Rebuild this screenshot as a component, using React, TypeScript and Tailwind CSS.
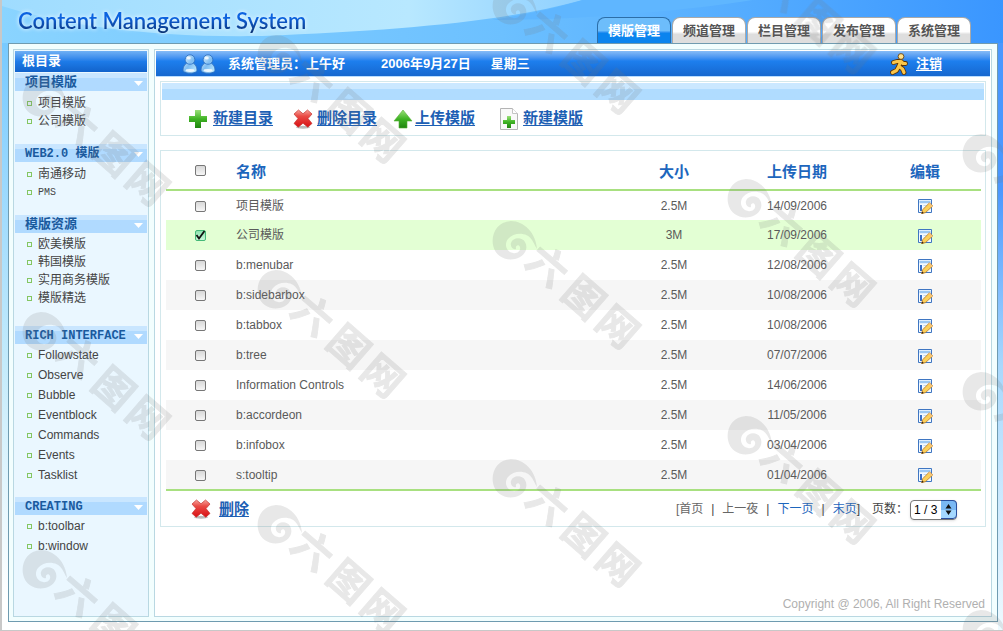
import { useState } from "react";
import clsx from "clsx";

const tabs = ["模版管理", "频道管理", "栏目管理", "发布管理", "系统管理"];

const sections = [
  { title: "项目模版", items: ["项目模版", "公司模版"], className: "pt-[3px] pb-[14px]" },
  { title: "WEB2.0 模版", items: ["南通移动", "PMS"], className: "pt-[3px] pb-[14px]" },
  { title: "模版资源", items: ["欧美模版", "韩国模版", "实用商务模版", "模版精选"], className: "pt-[2px] pb-[19px]" },
  {
    title: "RICH INTERFACE",
    items: ["Followstate", "Observe", "Bubble", "Eventblock", "Commands", "Events", "Tasklist"],
    className: "pt-px pb-3",
    tall: true,
  },
  { title: "CREATING", items: ["b:toolbar", "b:window"], className: "pt-px pb-3", tall: true },
];

const files = [
  { name: "项目模版", size: "2.5M", date: "14/09/2006" },
  { name: "公司模版", size: "3M", date: "17/09/2006" },
  { name: "b:menubar", size: "2.5M", date: "12/08/2006" },
  { name: "b:sidebarbox", size: "2.5M", date: "10/08/2006" },
  { name: "b:tabbox", size: "2.5M", date: "10/08/2006" },
  { name: "b:tree", size: "2.5M", date: "07/07/2006" },
  { name: "Information Controls", size: "2.5M", date: "14/06/2006" },
  { name: "b:accordeon", size: "2.5M", date: "11/05/2006" },
  { name: "b:infobox", size: "2.5M", date: "03/04/2006" },
  { name: "s:tooltip", size: "2.5M", date: "01/04/2006" },
];

const marks = [
  [513, 6], [513, 241], [513, 479],
  [278, 55], [278, 290], [278, 525],
  [748, -35], [748, 199], [748, 436],
  [983, 154], [983, 392], [983, 630],
  [43, 98], [43, 332], [43, 570],
];

function PlusIcon() {
  return (
    <svg width="20" height="20" viewBox="0 0 20 20" aria-hidden="true">
      <defs>
        <linearGradient id="plus" x1="0" y1="0" x2="0" y2="1">
          <stop offset="0" stopColor="#9be07a" />
          <stop offset="0.5" stopColor="#3fb324" />
          <stop offset="1" stopColor="#1f8410" />
        </linearGradient>
      </defs>
      <path d="M7 1h6v6h6v6h-6v6H7v-6H1V7h6z" fill="url(#plus)" />
    </svg>
  );
}

function CrossIcon() {
  return (
    <svg width="20" height="20" viewBox="0 0 20 20" aria-hidden="true">
      <defs>
        <linearGradient id="cross" x1="0" y1="0" x2="0" y2="1">
          <stop offset="0" stopColor="#f6a49c" />
          <stop offset="0.35" stopColor="#ea4b45" />
          <stop offset="1" stopColor="#d80f14" />
        </linearGradient>
      </defs>
      <ellipse cx="10" cy="18.3" rx="7" ry="1.5" fill="#bbb" />
      <path
        d="M1 5 5.500 1 10 4.800 14.500 1l4.500 4-4 4.600 4 4.800-4.200 3.800L10 14.200 5.200 18.200 1 14.400l4-4.800z"
        fill="url(#cross)"
        stroke="#c5322e"
        strokeWidth="0.7"
      />
    </svg>
  );
}

function UploadIcon() {
  return (
    <svg width="20" height="20" viewBox="0 0 20 20" aria-hidden="true">
      <path d="M10 1 19 12h-5v7H6v-7H1z" fill="url(#plus)" stroke="#55b036" strokeWidth="0.6" />
    </svg>
  );
}

function NewPageIcon() {
  return (
    <svg width="20" height="24" viewBox="0 0 20 24" aria-hidden="true">
      <path d="M1.500 1.500h12l5 5v16h-17z" fill="#f9f9f9" stroke="#b4b4b4" />
      <path d="M13.500 1.500v5h5" fill="#fff" stroke="#c4c4c4" />
      <path d="M8 9h4v4h4v4h-4v4H8v-4H4v-4h4z" fill="url(#plus)" />
    </svg>
  );
}

function PersonIcon() {
  return (
    <svg width="16" height="20" viewBox="0 0 16 20" aria-hidden="true">
      <defs>
        <linearGradient id="person" x1="0" y1="0" x2="1" y2="1">
          <stop offset="0" stopColor="#e9f7ff" />
          <stop offset="0.5" stopColor="#7dbcf2" />
          <stop offset="1" stopColor="#c6f0ff" />
        </linearGradient>
      </defs>
      <path
        d="M8 .8c-2.800 0-4.800 2-4.800 4.700 0 1.500.6 2.700 1.600 3.600C2.300 10.600 1 13 1 16c0 2 2.900 3.200 7 3.200s7-1.200 7-3.200c0-3-1.300-5.400-3.800-6.900 1-.9 1.600-2.100 1.600-3.600C12.800 2.800 10.800.8 8 .8z"
        fill="url(#person)"
        stroke="#2f6fc0"
        strokeWidth="0.9"
      />
      <path d="M4.800 9.300c2 1.300 4.400 1.300 6.400 0" fill="none" stroke="#3f82d0" />
      <ellipse cx="6.800" cy="4" rx="2" ry="1.600" fill="#fff" opacity="0.8" />
      <ellipse cx="8" cy="16.500" rx="4.500" ry="1.400" fill="#fff" opacity="0.8" />
    </svg>
  );
}

function RunnerIcon() {
  return (
    <svg width="18" height="22" viewBox="0 0 18 22" aria-hidden="true">
      <g strokeLinecap="round" strokeLinejoin="round" fill="none">
        <path d="M10.500 9 8.500 14M3.500 9.500 7 8.500h4l2 2h2.500M8.500 14 6.500 17.500l-4 2M9 13.500l3.500 2.500 1.500 3.500" stroke="#5b3204" strokeWidth="4.800" />
        <path d="M10.500 9 8.500 14M3.500 9.500 7 8.500h4l2 2h2.500M8.500 14 6.500 17.500l-4 2M9 13.500l3.500 2.500 1.500 3.500" stroke="#fcc64a" strokeWidth="3.200" />
      </g>
      <circle cx="11" cy="3.500" r="2.900" fill="#ffe08a" stroke="#5b3204" strokeWidth="0.800" />
    </svg>
  );
}

function EditIcon() {
  return (
    <svg width="16" height="16" viewBox="0 0 16 16" aria-hidden="true">
      <path d="M1.500 1.500h13v13h-13z" fill="#f4faff" stroke="#3f76c2" />
      <path d="M2.500 4h11" stroke="#9cc8f4" strokeWidth="2.500" />
      <path d="M3 7h2v6H3z" fill="#3a6ec4" />
      <path d="M6.500 7.500h5M6.500 10h3" stroke="#c2d8ef" />
      <path d="M12.500 4.800 15.700 8 8.500 14.600 4.600 15.700 5.700 11.700z" fill="#fbd05a" stroke="#b9791f" strokeWidth="0.800" />
      <path d="M12.500 4.800 15.700 8 14.400 9.200 11.200 6.100z" fill="#f5c27a" />
      <path d="m4.600 15.700.6-2.100 1.600 1.500z" fill="#3a220c" />
    </svg>
  );
}

function Checkbox({ label, checked, onChange }: { label: string; checked: boolean; onChange: () => void }) {
  return (
    <label className="inline-grid size-3 place-items-center align-middle">
      <span className="sr-only">{label}</span>
      <input
        type="checkbox"
        checked={checked}
        onChange={onChange}
        className="col-start-1 row-start-1 size-[11px] appearance-none rounded-xs border border-[#777] bg-linear-to-b from-[#d8d8d8] to-[#f6f6f6] checked:border-[#45b978] checked:from-[#8ee2b0] checked:to-[#c8f8da]"
      />
      {checked && (
        <svg width="12" height="12" viewBox="0 0 12 12" className="pointer-events-none col-start-1 row-start-1" aria-hidden="true">
          <path d="M2.500 5 5 8.500 10.500 1" fill="none" stroke="#111" strokeWidth="1.800" />
        </svg>
      )}
    </label>
  );
}

function ToolLink({ icon, children, className }: { icon: React.ReactNode; children: string; className?: string }) {
  return (
    <a href="#" className={clsx("flex items-center text-[15px] font-bold text-[#1d5fb4] underline underline-offset-2", className)}>
      {icon}
      {children}
    </a>
  );
}

function Sidebar() {
  return (
    <aside className="w-[136px] shrink-0 border border-[#b9d8e2] bg-[#eaf7ff] p-px">
      <h2 className="h-[21px] bg-linear-to-b from-[#6fb0f4] via-[#1d7be8] to-[#1263cb] px-[7px] text-[13px] leading-5 font-bold text-white">
        根目录
      </h2>
      <nav className="pt-px">
        {sections.map((section) => (
          <section key={section.title}>
            <h3 className="flex h-[18px] items-center justify-between bg-linear-to-b from-[#c9e6ff] from-30% to-[#b0daff] to-30% pt-[2px] pr-1 pl-[10px] font-['Liberation_Mono','Noto_Sans_CJK_SC',monospace] text-[12px] font-bold text-[#1a5a9e]">
              <span className={/[A-Z]/.test(section.title) ? "" : "text-[13px]"}>{section.title}</span>
              <svg width="9" height="5" viewBox="0 0 9 5" aria-hidden="true">
                <path d="M0 0h9L4.500 5z" fill="#fff" />
              </svg>
            </h3>
            <ul className={clsx("text-[12px] text-[#444]", section.className)}>
              {section.items.map((item) => (
                <li key={item} className={clsx("flex items-center gap-[6px] pl-3", section.tall ? "h-5" : "h-[18px]")}>
                  <span className="size-[5px] border border-[#84c662]" />
                  <a href="#" className={item === "PMS" ? "font-['Liberation_Mono',monospace] text-[10px]" : ""}>
                    {item}
                  </a>
                </li>
              ))}
            </ul>
          </section>
        ))}
      </nav>
    </aside>
  );
}

function FileTable() {
  const [selected, setSelected] = useState<string[]>(["公司模版"]);

  function toggle(name: string) {
    setSelected((prev) => (prev.includes(name) ? prev.filter((n) => n !== name) : [...prev, name]));
  }

  function toggleAll() {
    setSelected((prev) => (prev.length === files.length ? [] : files.map((f) => f.name)));
  }

  return (
    <table className="w-full table-fixed border-b-2 border-[#a8e080] text-[12px] text-[#5a5a5a]">
      <thead>
        <tr className="h-[39px] border-b-2 border-[#a8e080] text-[15px] text-[#1d66bd]">
          <th className="w-[68px]">
            <Checkbox label="全选" checked={selected.length === files.length} onChange={toggleAll} />
          </th>
          <th className="pt-1 pl-[2px] text-left">名称</th>
          <th className="w-[102px] pt-1">大小</th>
          <th className="w-[144px] pt-1">上传日期</th>
          <th className="w-28 pt-1">编辑</th>
        </tr>
      </thead>
      <tbody>
        {files.map((file, i) => {
          const checked = selected.includes(file.name);
          return (
            <tr key={file.name} className={clsx("h-[30px] text-center", checked ? "bg-[#e3ffd4]" : i % 2 ? "bg-[#f6f6f6]" : "bg-white")}>
              <td>
                <Checkbox label={file.name} checked={checked} onChange={() => toggle(file.name)} />
              </td>
              <td className="pl-[2px] text-left">{file.name}</td>
              <td>{file.size}</td>
              <td>{file.date}</td>
              <td>
                <button type="button" aria-label={"编辑 " + file.name} className="align-middle">
                  <EditIcon />
                </button>
              </td>
            </tr>
          );
        })}
      </tbody>
    </table>
  );
}

function Pager() {
  return (
    <div className="flex items-center text-[12px] text-[#444]">
      <span className="text-[#666]">[首页</span>
      <span className="px-2">|</span>
      <span className="text-[#666]">上一夜</span>
      <span className="px-2">|</span>
      <a href="#" className="text-[#1d66bd]">下一页</a>
      <span className="px-2">|</span>
      <a href="#" className="text-[#1d66bd]">末页</a>
      <span>]</span>
      <label htmlFor="page" className="pr-[2px] pl-3">页数：</label>
      <span className="grid h-[19px] w-[47px]">
        <select
          id="page"
          className="col-start-1 row-start-1 appearance-none rounded-sm border border-[#777] bg-white pl-[3px] text-[12px] text-black shadow-sm"
        >
          <option>1 / 3</option>
          <option>2 / 3</option>
          <option>3 / 3</option>
        </select>
        <svg width="16" height="19" viewBox="0 0 16 19" className="pointer-events-none col-start-1 row-start-1 justify-self-end" aria-hidden="true">
          <path d="M0 .5h12a3.500 3.500 0 0 1 3.500 3.500v11a3.500 3.500 0 0 1-3.500 3.500H0z" fill="#79b8f4" />
          <path d="M0 10h15.500v5a3.500 3.500 0 0 1-3.500 3.500H0z" fill="#a4d8ff" />
          <path d="M0 .5h12a3.500 3.500 0 0 1 3.500 3.500v11a3.500 3.500 0 0 1-3.500 3.500H0" fill="none" stroke="#2a4f9e" />
          <path d="M7.500 4 10.500 8.500h-6zM7.500 15 4.500 10.500h6z" fill="#111" />
        </svg>
      </span>
    </div>
  );
}

function Watermark() {
  return (
    <svg className="pointer-events-none absolute inset-0 size-full" aria-hidden="true">
      <g fill="#777" stroke="#777" opacity="0.17">
        {marks.map(([x, y]) => (
          <g key={x + "-" + y} transform={`translate(${x} ${y})`}>
            <path
              d="M22 8C21-8 9-20-4-20c-14 1-20 13-18 24C-20 15-10 20 0 18c9-2 14-10 10-17C7-4-2-4-4 2c-1 4 2 7 5 6-1-4 3-5 4-2 1 4-3 7-7 6-7-1-9-9-5-14C-1-9 12-9 17-1c2 3 3 6 5 9z"
              stroke="none"
            />
            <text
              x="41 89 134"
              y="12"
              textAnchor="middle"
              transform="rotate(41)"
              strokeWidth="0.800"
              className="font-['Noto_Sans_CJK_SC',sans-serif] text-[40px] font-bold"
            >
              六图网
            </text>
          </g>
        ))}
      </g>
    </svg>
  );
}

export default function App() {
  const [active, setActive] = useState("模版管理");

  return (
    <div className="relative flex min-h-screen flex-col overflow-hidden border-b border-l-2 border-[#c8c8c8] bg-white font-['Liberation_Sans','Noto_Sans_CJK_SC',sans-serif]">
      <header className="relative flex h-[43px] items-end justify-between bg-linear-to-r from-[#8ad4ff] via-[#6cc0ff] to-[#3a96ff] pr-8 pl-4">
        <svg viewBox="0 0 1000 43" preserveAspectRatio="none" className="absolute inset-0 size-full" aria-hidden="true">
          <defs>
            <linearGradient id="sky">
              <stop offset="0" stopColor="#9fdcff" />
              <stop offset="0.700" stopColor="#b8e8ff" />
              <stop offset="1" stopColor="#8fd0ff" />
            </linearGradient>
          </defs>
          <path d="M0 0h580C500 22 400 30 260 36 150 38 60 25 0 6z" fill="url(#sky)" />
          <path d="M580 0h170c-60 10-170 20-260 20 30-5 65-12 90-20z" fill="#5fb6ff" />
        </svg>
        <h1 className="relative h-9 bg-linear-to-b from-[#0b62e0] from-30% to-[#0a2a60] to-80% bg-clip-text font-['Lato',sans-serif] text-[22px] leading-7 font-semibold text-transparent drop-shadow-[0_0_2px_white]">
          Content Management System
        </h1>
        <nav className="relative flex gap-px">
          {tabs.map((tab) => (
            <button
              key={tab}
              type="button"
              onClick={() => setActive(tab)}
              className={clsx(
                "h-[26px] w-[74px] rounded-t-lg border border-b-0 text-center text-[13px] font-bold",
                active === tab
                  ? "border-[#2c6ea8] bg-linear-to-b from-[#6dbdfb] from-50% to-[#0b84ee] to-60% text-white"
                  : "border-[#a9a9a9] bg-linear-to-b from-white from-55% to-[#dedede] to-65% text-[#555]"
              )}
            >
              {tab}
            </button>
          ))}
        </nav>
      </header>

      <div className="flex flex-1">
        <div className="w-[6px] bg-linear-to-b from-[#78caff] via-[#c4ebfb] via-55% to-white to-95%" />
        <div className="mb-2 flex flex-1 gap-[5px] border border-[#6f9bb0] bg-[#f2fefe] px-1 pt-[5px] pr-[5px] pb-1">
          <Sidebar />
          <main className="flex flex-1 flex-col border border-[#b9d8e2] bg-white p-px">
            <div className="flex h-[26px] items-center justify-between border-b border-[#b9dcff] bg-linear-to-b from-[#86bbf6] via-[#1d7fee] via-40% to-[#1667cf] pr-12 pl-[26px] text-[13px] font-bold text-white">
              <div className="flex items-center">
                <PersonIcon />
                <span className="ml-[2px]"><PersonIcon /></span>
                <span className="ml-3">系统管理员：</span>
                <span>上午好</span>
                <span className="ml-9">2006年9月27日</span>
                <span className="ml-5">星期三</span>
              </div>
              <a href="#" className="flex items-center gap-2 underline underline-offset-2">
                <RunnerIcon />
                注销
              </a>
            </div>

            <div className="mx-1 mt-1 border border-[#d3e8ec] p-px">
              <div className="h-[17px] bg-linear-to-b from-[#cbe8ff] from-35% to-[#b0dcff] to-35%" />
              <div className="flex h-[34px] items-center pt-[3px] pl-[26px]">
                <ToolLink icon={<PlusIcon />} className="gap-[5px]">新建目录</ToolLink>
                <ToolLink icon={<CrossIcon />} className="ml-5 gap-1">删除目录</ToolLink>
                <ToolLink icon={<UploadIcon />} className="ml-4 gap-[2px]">上传模版</ToolLink>
                <ToolLink icon={<NewPageIcon />} className="ml-6 gap-1">新建模版</ToolLink>
              </div>
            </div>

            <div className="mx-1 mt-[14px] border border-[#d3e8ec] pr-1 pl-[5px]">
              <FileTable />
              <div className="flex h-[35px] items-center justify-between pt-px pr-6 pl-[25px]">
                <ToolLink icon={<CrossIcon />} className="gap-2">删除</ToolLink>
                <Pager />
              </div>
            </div>

            <footer className="mt-auto pr-[5px] pb-[2px] text-right text-[12px] text-[#b0b0b0]">
              Copyright @ 2006, All Right Reserved
            </footer>
          </main>
        </div>
        <div className="w-[5px] bg-linear-to-b from-[#4a98ff] from-25% via-[#a8d8fd] via-55% to-[#eefaff]" />
      </div>

      <Watermark />
    </div>
  );
}
